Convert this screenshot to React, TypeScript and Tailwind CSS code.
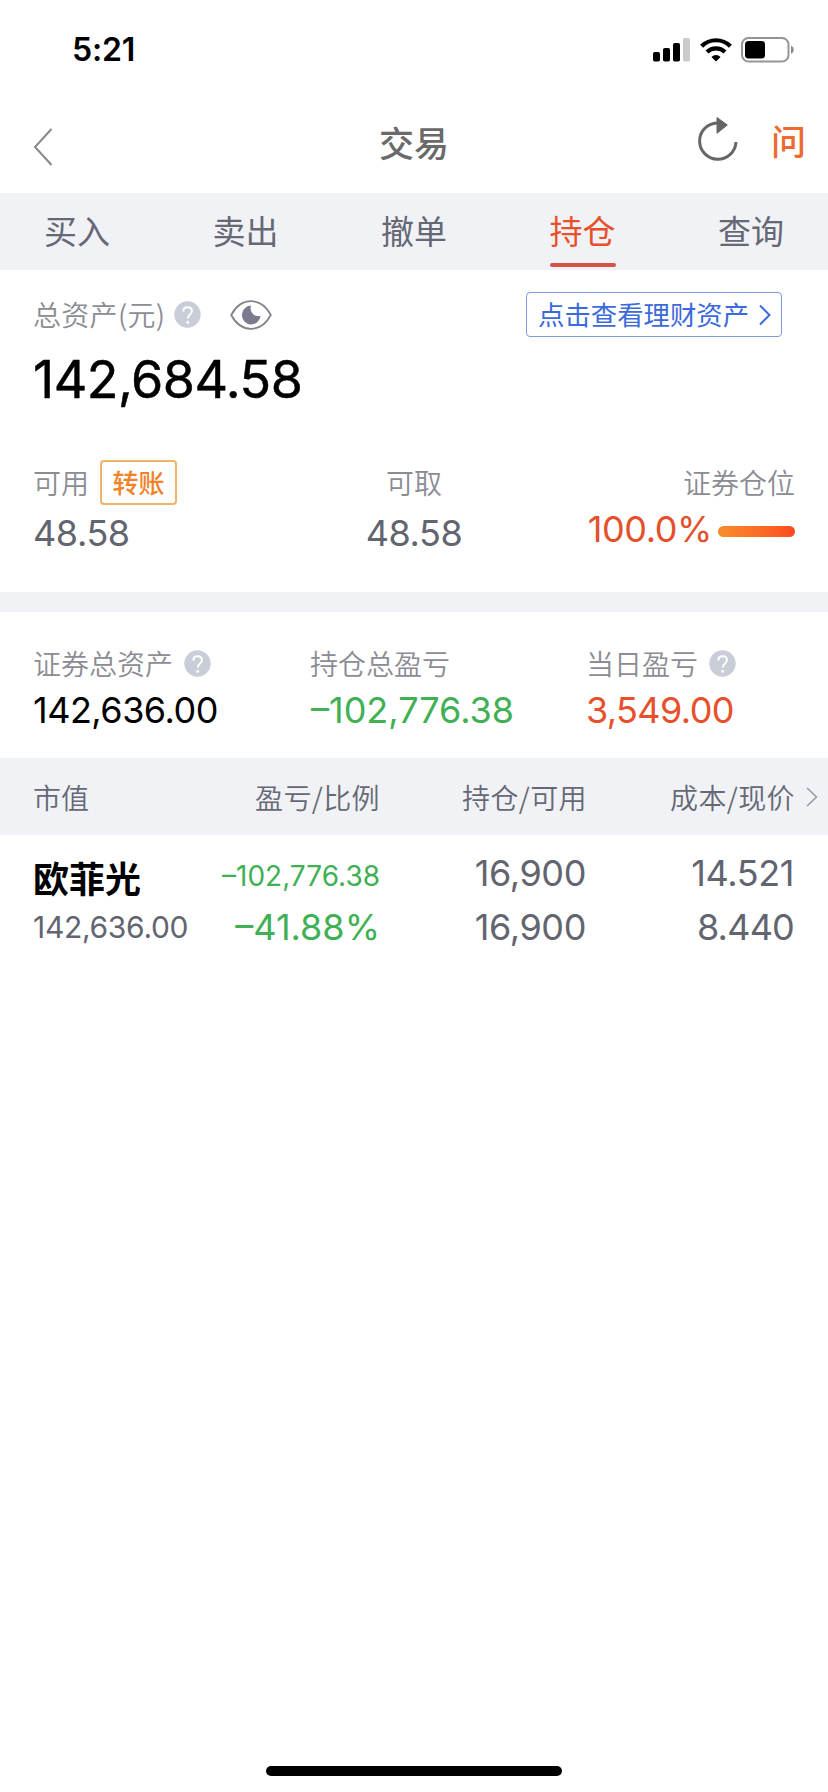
import { ReactNode } from "react";

const tabs = ["买入", "卖出", "撤单", "持仓", "查询"];

const Cn = ({ className = "", children }: { className?: string; children: ReactNode }) => (
  <span className={`font-['Noto_Sans_CJK_SC',sans-serif] whitespace-nowrap ${className}`}>{children}</span>
);

const Label = ({ className = "", children }: { className?: string; children: ReactNode }) => (
  <Cn className={`-mt-[1px] text-[28px] font-[350] leading-[40px] text-[#8c8c94] ${className}`}>{children}</Cn>
);

const Help = () => (
  <svg width="27" height="27" viewBox="0 0 27 27" fill="none" className="shrink-0">
    <circle cx="13.5" cy="13.5" r="13.2" fill="#c9cdd8" />
    <path d="M9.3 10.6C9.3 8 11 6.2 13.6 6.2s4.3 1.7 4.3 4c0 3.2-4.2 3.7-4.2 7.4" stroke="#fff" strokeWidth="2" />
    <circle cx="13.7" cy="21.2" r="1.5" fill="#fff" />
  </svg>
);

const StatusBar = () => (
  <div className="flex h-[100px] items-center justify-between pl-[72px] pr-[33px]">
    <p className="text-[32px] font-semibold leading-[36px] text-black tracking-[-0.2px]">5:21</p>
    <div className="flex items-center">
      <svg width="38" height="24" viewBox="0 0 38 24">
        <rect x="0" y="14" width="7" height="9.5" rx="1.8" />
        <rect x="10" y="10" width="7" height="13.5" rx="1.8" />
        <rect x="20" y="5" width="7" height="18.5" rx="1.8" />
        <rect x="30" y="0" width="7" height="23.5" rx="1.8" fill="#cacaca" />
      </svg>
      <svg width="32" height="24" viewBox="0 0 32 24" fill="none" stroke="#000" className="ml-[9px]">
        <path d="M1.6 8.2a20.4 20.4 0 0 1 28.8 0" strokeWidth="4.2" />
        <path d="M7 14a12.8 12.8 0 0 1 18 0" strokeWidth="4.2" />
        <path d="M16 23.4l-4.6-4.5a6.6 6.6 0 0 1 9.2 0z" fill="#000" stroke="none" />
      </svg>
      <svg width="54" height="26" viewBox="0 0 54 26" fill="none" className="ml-[9px]">
        <rect x="1" y="1" width="46.5" height="23.5" rx="6.5" stroke="#959595" strokeWidth="2" />
        <rect x="4" y="4" width="20" height="17.5" rx="3.5" fill="#000" />
        <path d="M50 8.8c3.6 1.2 3.6 6.8 0 8z" fill="#8a8a8a" />
      </svg>
    </div>
  </div>
);

const Header = () => (
  <div className="grid h-[93px] grid-cols-3 items-start px-[22px]">
    <svg width="40" height="40" viewBox="0 0 40 40" fill="none" stroke="#888" strokeWidth="2" className="ml-[2px] mt-[27px]">
      <path d="M27.5 2L11 20l16.5 18" />
    </svg>
    <Cn className="mt-[22px] text-center text-[35px] font-medium leading-[40px] text-[#6a6a6a]">交易</Cn>
    <div className="flex justify-end">
      <svg width="42" height="48" viewBox="0 0 42 48" fill="none" className="mt-[15px]">
        <path d="M20 7.9A18.2 18.2 0 1 0 39 27" stroke="#666" strokeWidth="3" />
        <path d="M20 2.500v15.800L30.300 10z" fill="#666" stroke="#666" strokeLinejoin="round" />
      </svg>
      <Cn className="ml-[32px] mt-[20px] text-[35px] font-medium leading-[40px] text-[#ee6a30]">问</Cn>
    </div>
  </div>
);

const TabBar = () => (
  <div className="flex h-[77px] justify-between bg-[#f0f2f6] px-[44px]">
    {tabs.map((tab) => (
      <div key={tab} className="flex flex-col items-center">
        <Cn className={`mt-[17px] text-[33px] leading-[40px] ${tab === "持仓" ? "text-[#e8502c]" : "text-[#666875]"}`}>{tab}</Cn>
        {tab === "持仓" && <div className="mt-[13px] h-1 w-full rounded-full bg-[#d4544a]" />}
      </div>
    ))}
  </div>
);

const Assets = () => (
  <div className="h-[322px] pl-[33px] pr-[33px] pt-[22px]">
    <div className="flex h-[45px] items-center">
      <Label className="tracking-[0.3px]">总资产(元)</Label>
      <div className="ml-[9px]"><Help /></div>
      <svg width="42" height="30" viewBox="0 0 42 30" fill="none" className="ml-[29px]">
        <path d="M1.2 15C6 6 13 1.2 21 1.2S36 6 40.8 15C36 24 29 28.8 21 28.8S6 24 1.2 15z" stroke="#83838c" strokeWidth="1.8" />
        <path d="M21 5.6a9.4 9.4 0 1 0 9.6 10.2c-5.4 2.2-11.6-3.6-9.6-10.2z" fill="#7b7b90" />
      </svg>
      <div className="ml-auto mr-[13px] flex h-[45px] w-[256px] items-center rounded-[4px] border border-[#7f9bdc] pl-[11px]">
        <Cn className="-mt-[1px] text-[26.4px] leading-[40px] text-[#3c69dc]">点击查看理财资产</Cn>
        <svg width="12" height="22" viewBox="0 0 12 22" fill="none" stroke="#3c69dc" strokeWidth="2" className="ml-[10px]">
          <path d="M1 1.5l9.5 9.5-9.5 9.5" />
        </svg>
      </div>
    </div>
    <p className="mt-[17px] text-[52px] leading-[52px] tracking-[-0.5px] text-black [-webkit-text-stroke:0.5px_black]">142,684.58</p>

    <div className="mt-[54px] grid grid-cols-3">
      <div>
        <div className="flex h-[45px] items-center">
          <Label>可用</Label>
          <div className="ml-[11px] flex h-[45px] w-[77px] items-center justify-center rounded-[4px] border-2 border-[#f0b468]">
            <Cn className="-mt-[1px] text-[26px] font-medium leading-[36px] text-[#f08228]">转账</Cn>
          </div>
        </div>
        <p className="mt-[8px] text-[36px] leading-[40px] tracking-[-0.4px] text-[#62656f]">48.58</p>
      </div>
      <div className="text-center">
        <div className="flex h-[45px] items-center justify-center">
          <Label>可取</Label>
        </div>
        <p className="mt-[8px] text-[36px] leading-[40px] tracking-[-0.4px] text-[#62656f]">48.58</p>
      </div>
      <div>
        <div className="flex h-[45px] items-center justify-end">
          <Label>证券仓位</Label>
        </div>
        <div className="mt-[4px] flex h-[40px] items-center justify-end">
          <p className="text-[36px] leading-[40px] tracking-[-0.4px] text-[#e2502c]">100.0%</p>
          <div className="ml-[6px] mt-[5px] h-[11px] w-[77px] rounded-full bg-linear-to-r from-[#f88c2c] to-[#fb4a20]" />
        </div>
      </div>
    </div>
  </div>
);

const summary = [
  { label: "证券总资产", value: "142,636.00", help: true, color: "text-black tracking-[-0.5px]" },
  { label: "持仓总盈亏", value: "–102,776.38", help: false, color: "ml-px text-[#41b055]" },
  { label: "当日盈亏", value: "3,549.00", help: true, color: "text-[#e8502c] tracking-[-0.6px]" },
];

const Summary = () => (
  <div className="grid h-[146px] grid-cols-[277px_276px_1fr] pl-[33px] pt-[31px]">
    {summary.map((item) => (
      <div key={item.label}>
        <div className="flex h-[40px] items-center">
          <Label>{item.label}</Label>
          {item.help && <div className="ml-[11px]"><Help /></div>}
        </div>
        <p className={`mt-[7px] text-[36px] leading-[40px] ${item.color}`}>{item.value}</p>
      </div>
    ))}
  </div>
);

const Holdings = () => (
  <div>
    <div className="flex h-[77px] items-center bg-[#f0f2f6] pl-[33px] pr-[10px] text-[28px] font-[350] leading-[40px] text-[#666875]">
      <Cn className="w-[146px]">市值</Cn>
      <Cn className="w-[201px] text-right tracking-[0.4px]">盈亏/比例</Cn>
      <Cn className="w-[207px] text-right tracking-[0.4px]">持仓/可用</Cn>
      <Cn className="w-[208px] text-right tracking-[0.4px]">成本/现价</Cn>
      <svg width="12" height="20" viewBox="0 0 12 20" fill="none" stroke="#96989f" strokeWidth="1.5" className="ml-auto">
        <path d="M1 1l9.5 9-9.5 9" />
      </svg>
    </div>
    <div className="flex pl-[33px] pt-[17px] text-[36px] leading-[42px] tracking-[-0.4px] text-[#62656f]">
      <div className="w-[170px]">
        <Cn className="block text-[36px] font-bold leading-[50px] tracking-normal text-black">欧菲光</Cn>
        <p className="mt-[4px] text-[30px] tracking-[-0.3px]">142,636.00</p>
      </div>
      <div className="w-[177px] text-right text-[#41b055]">
        <p className="mt-[3px] text-[28px] tracking-normal">–102,776.38</p>
        <p className="mt-[9px] tracking-normal">–41.88%</p>
      </div>
      <div className="w-[206px] text-right">
        <p>16,900</p>
        <p className="mt-[12px]">16,900</p>
      </div>
      <div className="w-[208px] text-right">
        <p>14.521</p>
        <p className="mt-[12px] tracking-[-0.8px]">8.440</p>
      </div>
    </div>
  </div>
);

const App = () => {
  return (
    <div className="flex h-[1792px] w-[828px] flex-col overflow-hidden bg-white font-['Inter','Noto_Sans_CJK_SC',sans-serif]">
      <StatusBar />
      <Header />
      <TabBar />
      <Assets />
      <div className="h-5 bg-[#f0f2f6]" />
      <Summary />
      <Holdings />
      <div className="mx-auto mb-4 mt-auto h-[10px] w-[296px] rounded-full bg-black" />
    </div>
  );
};

export default App;
